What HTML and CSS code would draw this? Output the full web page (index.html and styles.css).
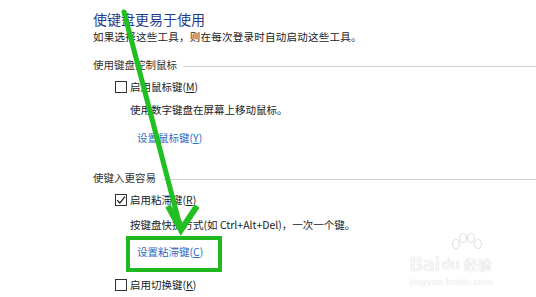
FILE: index.html
```html
<!DOCTYPE html>
<html lang="zh-CN">
<head>
<meta charset="utf-8">
<link rel="stylesheet" href="styles.css">
</head>
<body>
<div class="page">
  <div class="title">使键盘更易于使用</div>
  <div class="desc">如果选择这些工具，则在每次登录时自动启动这些工具。</div>

  <div class="group g1"><span>使用键盘控制鼠标</span><i class="rule"></i></div>
  <div class="check-row r1"><span class="box"></span><span>启用鼠标键(<u>M</u>)</span></div>
  <div class="sub s1">使用数字键盘在屏幕上移动鼠标。</div>
  <div class="link l1">设置鼠标键(<u>Y</u>)</div>

  <div class="group g2"><span>使键入更容易</span><i class="rule"></i></div>
  <div class="check-row r2"><span class="box"><svg viewBox="0 0 12 12" width="12" height="12"><path d="M2.2 6.2 L4.8 9 L10 2.6" fill="none" stroke="#222" stroke-width="1.2"/></svg></span><span>启用粘滞键(<u>R</u>)</span></div>
  <div class="sub s2">按键盘快捷方式(如 Ctrl+Alt+Del)，一次一个键。</div>
  <div class="hl"><span class="link">设置粘滞键(<u>C</u>)</span></div>
  <div class="check-row r3"><span class="box"></span><span>启用切换键(<u>K</u>)</span></div>
</div>

<svg class="arrow" width="536" height="297" viewBox="0 0 536 297">
  <line x1="124" y1="12" x2="180" y2="226" stroke="#22bf22" stroke-width="5" stroke-linecap="round"/>
  <polyline points="168,206 181,230 197,206" fill="none" stroke="#22bf22" stroke-width="6" stroke-linejoin="miter"/>
</svg>

<div class="wm">
  <svg class="paw" width="40" height="30" viewBox="0 0 40 30">
    <g fill="none" stroke="#e2e2e2" stroke-width="1.2">
      <ellipse cx="10" cy="12" rx="3.5" ry="4.5"/>
      <ellipse cx="17" cy="6" rx="3.5" ry="4.5"/>
      <ellipse cx="25" cy="6" rx="3.5" ry="4.5"/>
      <ellipse cx="32" cy="12" rx="3.5" ry="4.5"/>
    </g>
  </svg>
  <div class="wm-top"><span class="bai">Bai</span><span class="du">du</span><span class="jy">经验</span></div>
  <div class="wm-url">jingyan.baidu.com</div>
</div>
</body>
</html>
```

FILE: styles.css
```css
html, body {
  margin: 0;
  padding: 0;
  background: #ffffff;
}
body {
  width: 536px;
  height: 297px;
  overflow: hidden;
  position: relative;
  font-family: "Noto Sans CJK SC", "Noto Sans", sans-serif;
  font-size: 10.5px;
  color: #222;
}
.page {
  padding: 11px 0 0 93px;
}
.title {
  font-size: 14px;
  line-height: 16px;
  color: #1f3a8f;
}
.desc {
  margin-top: 3px;
  line-height: 14px;
  letter-spacing: 0.25px;
}
u {
  text-decoration: underline;
  text-underline-offset: 1px;
}
.group {
  display: flex;
  align-items: center;
  line-height: 14px;
  color: #333;
}
.group .rule {
  flex: 1;
  height: 1px;
  background: #d2d2d2;
  margin-left: 6px;
  margin-top: 2px;
}
.g1 { margin-top: 14px; }
.g2 { margin-top: 26px; }
.check-row {
  display: flex;
  align-items: center;
  gap: 3px;
  padding-left: 22px;
  line-height: 14px;
}
.box {
  width: 10px;
  height: 10px;
  border: 1px solid #333;
  background: #fff;
  position: relative;
  flex: none;
}
.box svg {
  position: absolute;
  left: -1px;
  top: -1px;
}
.r1 { margin-top: 8px; }
.r2 { margin-top: 8px; }
.r3 { margin-top: 6px; }
.sub {
  padding-left: 37px;
  line-height: 14px;
}
.s1 { margin-top: 9px; }
.s2 { margin-top: 11px; }
.link {
  color: #2b6cc4;
  line-height: 14px;
}
.l1 {
  padding-left: 44px;
  margin-top: 14px;
}
.hl {
  box-sizing: border-box;
  margin: 4px 0 0 33px;
  width: 96px;
  height: 36px;
  border: 4px solid #1fb91f;
  padding: 5px 0 0 7px;
}
.hl .link {
  display: block;
}
.arrow {
  position: absolute;
  left: 0;
  top: 0;
  pointer-events: none;
}
.wm {
  position: absolute;
  left: 410px;
  top: 240px;
  width: 100px;
  color: #fafafa;
  font-family: "DejaVu Sans", sans-serif;
}
.paw {
  position: absolute;
  left: 36px;
  top: -8px;
}
.wm-top {
  display: flex;
  align-items: flex-end;
  margin-top: 14px;
  line-height: 20px;
}
.bai, .du, .jy {
  text-shadow: 0 0 1px #d4d4d4, 0 0 1px #d4d4d4;
}
.bai { font-size: 19px; }
.du { font-size: 14px; margin-left: 2px; }
.jy { font-size: 14px; margin-left: 4px; font-family: "Noto Sans CJK SC", sans-serif; }
.wm-url {
  font-size: 9px;
  line-height: 12px;
  margin-top: 2px;
  text-shadow: 0 0 1px #d8d8d8;
}
```
